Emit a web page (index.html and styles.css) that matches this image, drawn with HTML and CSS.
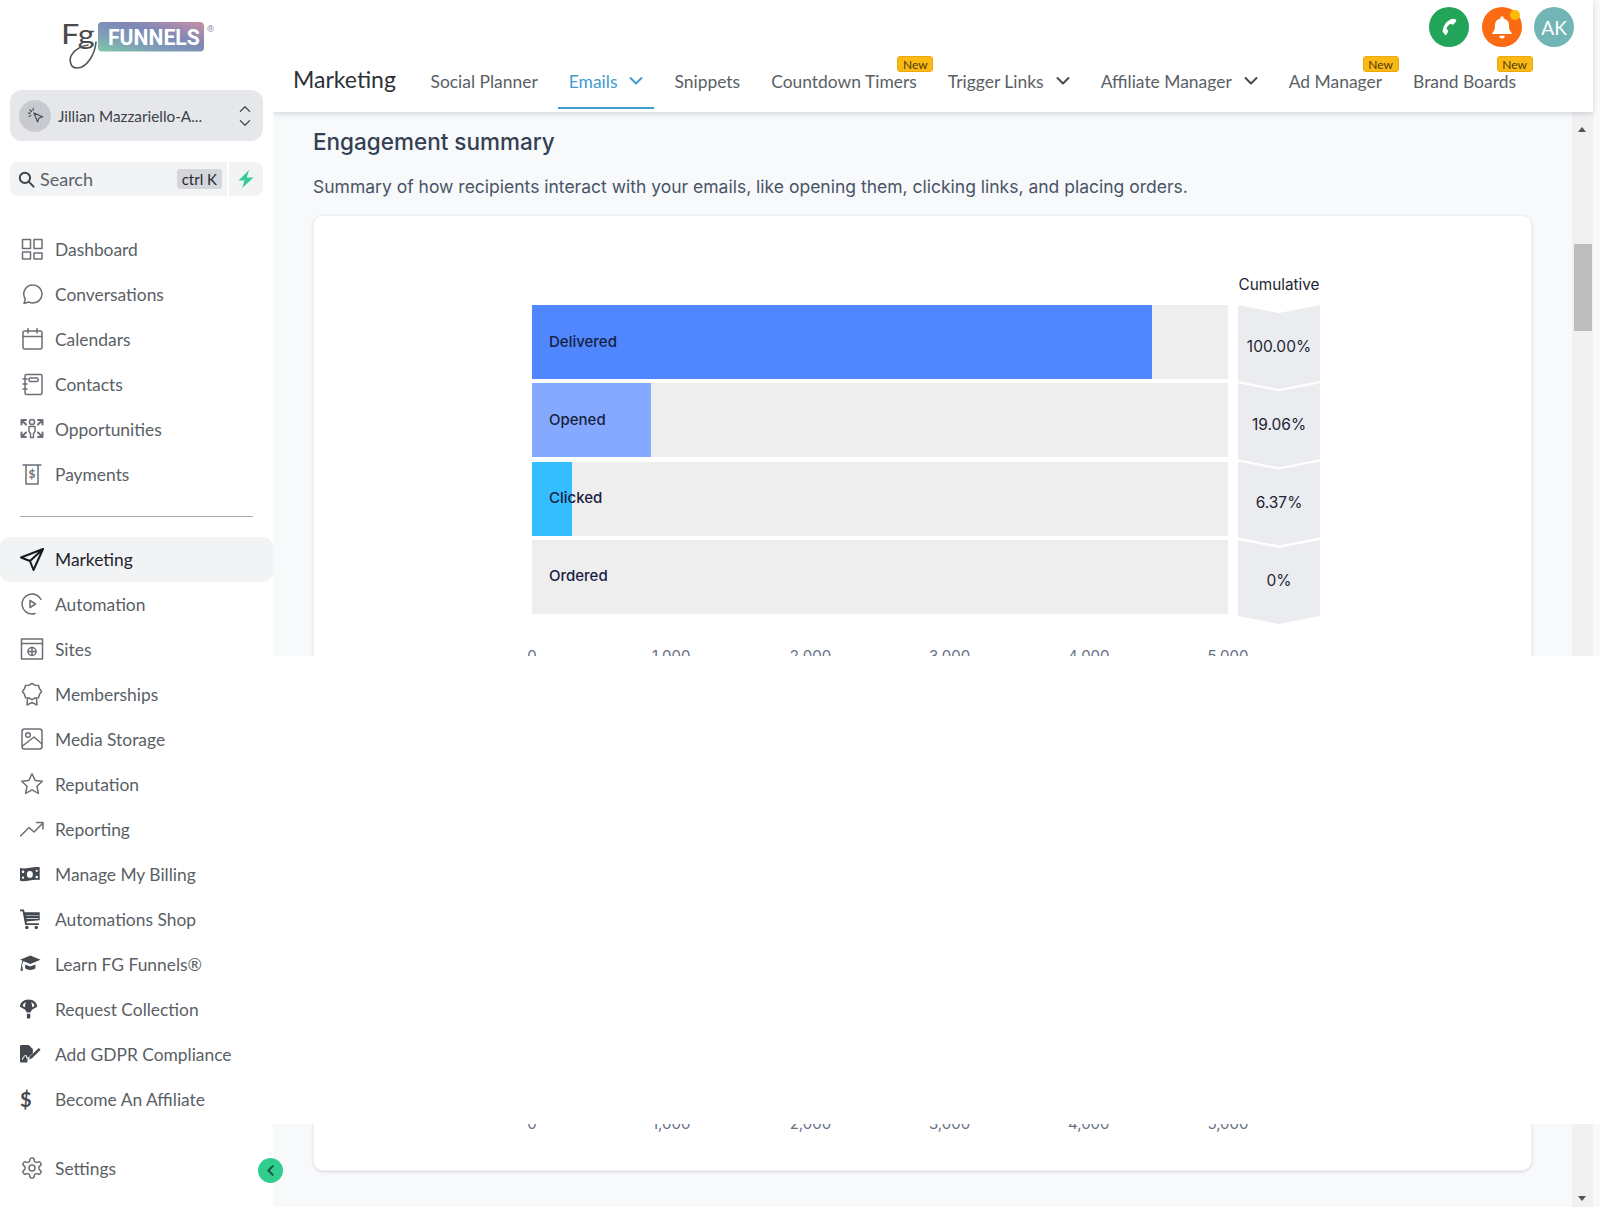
FILE: index.html
```html
<!DOCTYPE html>
<html lang="en">
<head>
<meta charset="utf-8">
<title>Marketing - Engagement summary</title>
<link rel="stylesheet" href="styles.css">
</head>
<body>
<div class="app">
  <aside class="sidebar">
    <div class="logo">
      <svg class="logo-svg" viewBox="0 0 160 52" width="160" height="52">
        <defs>
          <linearGradient id="lg" x1="0" y1="1" x2="1" y2="0">
            <stop offset="0" stop-color="#7dcaa2"/>
            <stop offset=".3" stop-color="#7f9fb8"/>
            <stop offset=".6" stop-color="#7d88b6"/>
            <stop offset="1" stop-color="#c98fa6"/>
          </linearGradient>
        </defs>
        <rect x="38" y="0" width="106" height="29.500" rx="4" fill="url(#lg)"/>
        <text class="logo-word" transform="translate(48 23) scale(.94 1)">FUNNELS</text>
        <text class="logo-reg" x="147" y="10">®</text>
        <text class="logo-fg" transform="translate(1 22) scale(1.250 1)">Fg</text>
        <path class="logo-tail" d="M36 20C35 32 27 46 17 46C10 46 8 37 13 31C17 26 22 24 28 23"/>
      </svg>
    </div>

    <div class="switcher">
      <span class="switch-avatar">
        <svg viewBox="0 0 24 24" width="19" height="19" class="ic-s"><path d="M10 9l11 4.500-4.500 1.700L14.600 20z"/><path d="M5 5l2 2M9 3v2.500M3 9h2.500M4 13l2-1"/></svg>
      </span>
      <span class="switch-name">Jillian Mazzariello-A...</span>
      <svg class="switch-arrows ic-s" viewBox="0 0 14 26" width="14" height="24"><path d="M2 8l5-5 5 5M2 18l5 5 5-5"/></svg>
    </div>

    <div class="search-row">
      <div class="search">
        <svg viewBox="0 0 24 24" width="19" height="19" class="ic-d"><circle cx="10" cy="10" r="6.500"/><path d="M15 15l6 6"/></svg>
        <span class="search-label">Search</span>
        <span class="kbd">ctrl K</span>
      </div>
      <div class="bolt">
        <svg viewBox="0 0 24 24" width="18" height="20"><path fill="#37ca93" d="M16 0L2 14h8l-3 10 15-14h-9z"/></svg>
      </div>
    </div>

    <nav class="nav">
      <a class="nav-item"><svg class="ic" viewBox="0 0 24 24"><rect x="2.500" y="2.500" width="8" height="9"/><rect x="14" y="2.500" width="8" height="9"/><rect x="2.500" y="15" width="8" height="7"/><rect x="14" y="16" width="8" height="6"/></svg><span>Dashboard</span></a>
      <a class="nav-item"><svg class="ic" viewBox="0 0 24 24"><path d="M13 3a9 9 0 0 1 0 18c-1.600 0-3-.4-4.300-1L4 21.500l1.300-4.500A9 9 0 0 1 13 3z"/></svg><span>Conversations</span></a>
      <a class="nav-item"><svg class="ic" viewBox="0 0 24 24"><rect x="3" y="4" width="19" height="18" rx="1.500"/><path d="M3 9.500h19M8 1.500V6M17 1.500V6"/></svg><span>Calendars</span></a>
      <a class="nav-item"><svg class="ic" viewBox="0 0 24 24"><rect x="5" y="2.500" width="17" height="20" rx="1.500"/><rect x="9" y="6" width="9" height="3.500" rx="1"/><path d="M3 7h4M3 12h4M3 17h4"/></svg><span>Contacts</span></a>
      <a class="nav-item"><svg class="ic" viewBox="0 0 24 24"><circle cx="12" cy="5" r="2.500"/><path d="M9 9.500h6v5l-1.500 2v4h-3v-4L9 14.500z"/><path class="thick" d="M1.500 3h4.500M1.500 3v4.500M1.500 3l4.500 4.500M22.500 3H18M22.500 3v4.500M22.500 3L18 7.500M1.500 20H6M1.500 20v-4.500M1.500 20L6 15.500M22.500 20H18M22.500 20v-4.500M22.500 20L18 15.500"/></svg><span>Opportunities</span></a>
      <a class="nav-item"><svg class="ic" viewBox="0 0 24 24"><path d="M3 3h18M6 3v19h12V3"/><text class="ic-text" x="12" y="16" text-anchor="middle">$</text></svg><span>Payments</span></a>

      <div class="divider"></div>

      <a class="nav-item active"><svg class="ic ic-dark" viewBox="0 0 24 24"><path d="M23 2L1 10.500l9 3.500 3.500 9zM23 2L10 14"/></svg><span>Marketing</span></a>
      <a class="nav-item"><svg class="ic" viewBox="0 0 24 24"><path d="M21 7.500A10 10 0 1 0 12 22a10 10 0 0 0 3-.5M13 2a10 10 0 0 1 3 .9"/><path d="M10 8.500l5.500 3.500-5.500 3.500z"/></svg><span>Automation</span></a>
      <a class="nav-item"><svg class="ic" viewBox="0 0 24 24"><rect x="1.500" y="2" width="21" height="20"/><path d="M1.500 6.500h21"/><circle cx="12" cy="14.500" r="4"/><path d="M8 14.500h8M12 10.500v8"/></svg><span>Sites</span></a>
      <a class="nav-item"><svg class="ic" viewBox="0 0 24 24"><path d="M12 1.500l3 1.700 3.500.3 1 3.300 2 2.700-2 2.900-1 3.300-3.500.3-3 1.700-3-1.700-3.500-.3-1-3.300-2-2.900 2-2.700 1-3.300 3.500-.3z"/><path d="M7.500 16.500L7 23l5-2.500 5 2.500-.5-6.500"/></svg><span>Memberships</span></a>
      <a class="nav-item"><svg class="ic" viewBox="0 0 24 24"><rect x="2" y="2" width="20" height="20" rx="2.500"/><circle cx="8" cy="8" r="2.300"/><path d="M2.500 19L14 10l8 7"/></svg><span>Media Storage</span></a>
      <a class="nav-item"><svg class="ic" viewBox="0 0 24 24"><path d="M12 1.800l3.100 6.600 7.200.9-5.300 5 1.400 7.100-6.400-3.500-6.400 3.500L7 14.300l-5.300-5 7.200-.9z"/></svg><span>Reputation</span></a>
      <a class="nav-item"><svg class="ic" viewBox="0 0 24 24"><path d="M0.500 19L9 10.500l5 4.500 9-9M16.500 5.500H23V12"/></svg><span>Reporting</span></a>
      <a class="nav-item"><svg class="ic ic-fill" viewBox="0 -2 28 28"><path fill-rule="evenodd" d="M0 5c7 2 15-2.500 23-1v15c-8-1.500-16 2.500-23 1zM11.500 8.500a3.500 4 0 1 0 0 8 3.500 4 0 0 0 0-8zM3.500 8a1.500 1.500 0 1 0 0 3 1.500 1.500 0 0 0 0-3zM19.500 14a1.500 1.500 0 1 0 0 3 1.500 1.500 0 0 0 0-3zM19.500 7a1.300 1.300 0 1 0 0 2.600 1.300 1.300 0 0 0 0-2.600zM3.500 15a1.300 1.300 0 1 0 0 2.600 1.300 1.300 0 0 0 0-2.600z"/></svg><span>Manage My Billing</span></a>
      <a class="nav-item"><svg class="ic ic-fill" viewBox="0 -2 28 28"><path fill-rule="evenodd" d="M0 1h4.500l1 3H23v9.500L7.500 15l.5 2h14v2H6L3 3H0zM7 7.200v.8h15v-.8zM7.500 10.800v.8h14v-.8z"/><circle cx="8" cy="22" r="2"/><circle cx="19" cy="22" r="2"/></svg><span>Automations Shop</span></a>
      <a class="nav-item"><svg class="ic ic-fill" viewBox="0 -2 28 28"><path d="M12 2L0 7l3 1.300C2 10 1.500 12 1.500 14L.5 20h3l-1-6c0-1.800.5-3.800 1.800-5.300L12 12l12-5z"/><path d="M6 12.500V17c3 2.500 9 2.500 12 0v-4.500L12 15z"/></svg><span>Learn FG Funnels®</span></a>
      <a class="nav-item"><svg class="ic ic-fill" viewBox="0 -2 28 28"><path d="M10 1C4 1 0 5 0 9.500L6 13l2 3h4l2-3 6-3.500C20 5 16 1 10 1zM6 10L3 8.500C3.500 6 5 4.500 7 4c-1 1.500-1.200 3.500-1 6zm8 0c.2-2.500 0-4.500-1-6 2 .5 3.500 2 4 4.500zM8 17.500h4V22a1 1 0 0 1-1 1H9a1 1 0 0 1-1-1z"/></svg><span>Request Collection</span></a>
      <a class="nav-item"><svg class="ic ic-fill" viewBox="0 -2 28 28"><path fill-rule="evenodd" d="M0 3a1.500 1.500 0 0 1 1.500-1.500H10l5 5V11l-6 6-.5 5h-7A1.500 1.500 0 0 1 0 20.500zM3 19c2-4 3.500-6 4-3.500s1.500 2 3 1l-.5-1c-1 .6-1.200.4-1.500-.7-.6-3-3.500-2-6 3.700z"/><path d="M10 1.500v5h5zM22 5l2 2-10 10-3.500 1.500 1-3.500z"/></svg><span>Add GDPR Compliance</span></a>
      <a class="nav-item"><span class="ic-dollar">$</span><span>Become An Affiliate</span></a>

      <a class="nav-item settings"><svg class="ic" viewBox="0 0 24 24"><path d="M12.220 2h-.44a2 2 0 0 0-2 2v.18a2 2 0 0 1-1 1.730l-.43.25a2 2 0 0 1-2 0l-.15-.08a2 2 0 0 0-2.730.73l-.22.38a2 2 0 0 0 .73 2.730l.15.1a2 2 0 0 1 1 1.720v.51a2 2 0 0 1-1 1.740l-.15.09a2 2 0 0 0-.73 2.730l.22.38a2 2 0 0 0 2.730.73l.15-.08a2 2 0 0 1 2 0l.43.25a2 2 0 0 1 1 1.730V20a2 2 0 0 0 2 2h.44a2 2 0 0 0 2-2v-.18a2 2 0 0 1 1-1.730l.43-.25a2 2 0 0 1 2 0l.15.08a2 2 0 0 0 2.730-.73l.22-.39a2 2 0 0 0-.73-2.730l-.15-.08a2 2 0 0 1-1-1.740v-.5a2 2 0 0 1 1-1.740l.15-.09a2 2 0 0 0 .73-2.730l-.22-.38a2 2 0 0 0-2.730-.73l-.15.08a2 2 0 0 1-2 0l-.43-.25a2 2 0 0 1-1-1.730V4a2 2 0 0 0-2-2z"/><circle cx="12" cy="12" r="3"/></svg><span>Settings</span></a>
    </nav>

    <button class="collapse" type="button" aria-label="Collapse sidebar">
      <svg viewBox="0 0 12 12" width="13" height="13"><path d="M8 2L4 6l4 4"/></svg>
    </button>
  </aside>

  <main class="main">
    <header class="topbar">
      <div class="top-actions">
        <span class="circle c-green">
          <svg viewBox="0 0 24 24" width="22" height="22"><path fill="#fff" d="M19 3.500l-3.500-.5c-6 2-10 7.500-10.500 14l2.500 3.500c.8.400 1.500.200 2-.5l1.500-3c.3-.7.200-1.300-.4-1.800l-1.400-1.200c.8-2.500 2-4 4.300-5.500l1.800.9c.7.300 1.300.100 1.800-.4l2.500-3c.6-.9.500-1.800-.6-2.500z"/></svg>
        </span>
        <span class="circle c-orange">
          <svg viewBox="0 0 24 24" width="26" height="26"><path fill="#fff" d="M12 2a1.500 1.500 0 0 1 1.500 1.500v.7A6.500 6.500 0 0 1 18.500 10.500c0 4 1 5.500 2.500 7v1H3v-1c1.500-1.500 2.500-3 2.500-7A6.500 6.500 0 0 1 10.500 4.200v-.7A1.500 1.500 0 0 1 12 2zM9.500 20h5a2.500 2.500 0 0 1-5 0z"/></svg>
          <span class="dot"></span>
        </span>
        <span class="circle c-teal">AK</span>
      </div>
      <div class="tabbar">
        <h1 class="page-title">Marketing</h1>
        <div class="tabs">
          <a class="tab">Social Planner</a>
          <a class="tab tab-active">Emails<svg class="chev" viewBox="0 0 14 10" width="14" height="10"><path d="M1.500 2l5.500 5.500L12.500 2"/></svg></a>
          <a class="tab">Snippets</a>
          <a class="tab">Countdown Timers<span class="badge">New</span></a>
          <a class="tab">Trigger Links<svg class="chev" viewBox="0 0 14 10" width="14" height="10"><path d="M1.500 2l5.500 5.500L12.500 2"/></svg></a>
          <a class="tab">Affiliate Manager<svg class="chev" viewBox="0 0 14 10" width="14" height="10"><path d="M1.500 2l5.500 5.500L12.500 2"/></svg></a>
          <a class="tab">Ad Manager<span class="badge">New</span></a>
          <a class="tab">Brand Boards<span class="badge">New</span></a>
        </div>
      </div>
    </header>

    <div class="body">
      <div class="content">
        <h2 class="section-title">Engagement summary</h2>
        <p class="section-desc">Summary of how recipients interact with your emails, like opening them, clicking links, and placing orders.</p>
        <section class="card">
          <div class="chart">
            <div class="chart-head"><span class="cum-title">Cumulative</span></div>
            <div class="rows">
              <div class="row">
                <div class="bar"><div class="fill fill-a" style="width:89.1%"></div><span class="bar-label">Delivered</span></div>
                <div class="cum"><span>100.00%</span></div>
              </div>
              <div class="row">
                <div class="bar"><div class="fill fill-b" style="width:17.1%"></div><span class="bar-label">Opened</span></div>
                <div class="cum"><span>19.06%</span></div>
              </div>
              <div class="row">
                <div class="bar"><div class="fill fill-c" style="width:5.7%"></div><span class="bar-label">Clicked</span></div>
                <div class="cum"><span>6.37%</span></div>
              </div>
              <div class="row">
                <div class="bar"><span class="bar-label">Ordered</span></div>
                <div class="cum"><span>0%</span></div>
              </div>
            </div>
            <div class="axis"><span>0</span><span>1,000</span><span>2,000</span><span>3,000</span><span>4,000</span><span>5,000</span></div>
            <div class="chart-gap"></div>
            <div class="axis"><span>0</span><span>1,000</span><span>2,000</span><span>3,000</span><span>4,000</span><span>5,000</span></div>
          </div>
        </section>
      </div>
      <div class="scrollbar">
        <span class="arrow-up"></span>
        <div class="thumb"></div>
        <span class="arrow-down"></span>
      </div>
    </div>

    <div class="blank"></div>
  </main>
</div>
</body>
</html>
```

FILE: styles.css
```css
* { box-sizing: border-box; }
html, body { margin: 0; padding: 0; height: 1207px; overflow: hidden; background: #fff; }
body { font-family: "Lato", sans-serif; color: #555b63; }

.app { display: flex; height: 1207px; }

/* Sidebar */
.sidebar { position: relative; z-index: 3; flex: 0 0 273px; width: 273px; background: #fff; display: flex; flex-direction: column; }
.logo { height: 90px; padding: 22px 0 0 60px; }
.logo-svg { display: block; overflow: visible; }
.logo-word { font-family: "Roboto", sans-serif; font-weight: 700; font-size: 22.500px; fill: #fff; }
.logo-reg { font-family: "Roboto", sans-serif; font-size: 9px; fill: #8a8f99; }
.logo-fg { font-family: "Lato", sans-serif; font-weight: 400; font-size: 26px; fill: #4a4a4a; }
.logo-tail { fill: none; stroke: #555; stroke-width: 1.600; stroke-linecap: round; }

.switcher { margin: 0 10px; height: 51px; background: #e6e7eb; border-radius: 12px; display: flex; align-items: center; padding: 0 9px; }
.switch-avatar { flex: 0 0 32px; height: 32px; border-radius: 50%; background: #c9cacf; display: flex; align-items: center; justify-content: center; }
.switch-name { flex: 1; margin-left: 7px; font-size: 15.300px; color: #3b4048; white-space: nowrap; }
.switch-arrows { margin-right: 2px; }
.ic-s { fill: none; stroke: #444a52; stroke-width: 1.500; stroke-linecap: round; stroke-linejoin: round; }
.ic-d { fill: none; stroke: #3f444c; stroke-width: 2.500; stroke-linecap: round; flex: none; }

.search-row { margin: 21px 10px 31px; height: 34px; display: flex; gap: 2px; }
.search { flex: 0 0 217px; background: #f2f3f5; border-radius: 8px 0 0 8px; display: flex; align-items: center; padding: 0 5px 0 7px; }
.search-label { flex: 1; margin-left: 4px; font-size: 18px; color: #5b6068; }
.kbd { height: 20px; line-height: 20px; padding: 0 5px; background: #d4d6db; border-radius: 3px; font-size: 15px; color: #262a30; }
.bolt { flex: 1; background: #f2f3f5; border-radius: 0 8px 8px 0; display: flex; align-items: center; justify-content: center; }

.nav { display: flex; flex-direction: column; }
.nav-item { height: 45px; display: flex; align-items: center; padding: 0 0 1px 20px; gap: 11px; font-size: 17.400px; color: #5a5f66; border-radius: 10px; white-space: nowrap; }
.nav-item.active { background: #f2f3f5; color: #20242a; }
.nav-item.settings { margin-top: 24px; }
.divider { height: 1px; margin: 19px 20px 20px; background: #a6a9af; }
.ic { flex: 0 0 24px; width: 24px; height: 24px; fill: none; stroke: #6b6f75; stroke-width: 1.500; stroke-linecap: round; stroke-linejoin: round; }
.ic .thick { stroke-width: 2; }
.ic-dark { stroke: #15181d; stroke-width: 2; }
.ic-fill { fill: #44484f; stroke: none; }
.ic-text { font-family: "Lato", sans-serif; font-size: 12px; font-weight: 700; fill: #6b6f75; stroke: none; }
.ic-dollar { flex: 0 0 24px; width: 24px; line-height: 24px; font-size: 20px; font-weight: 700; color: #44484f; }

.collapse { position: absolute; left: 258px; top: 1158px; width: 25px; height: 25px; padding: 0; border: 0; border-radius: 50%; background: #2fce8f; display: flex; align-items: center; justify-content: center; }
.collapse path { fill: none; stroke: #1c5a44; stroke-width: 2; stroke-linecap: round; stroke-linejoin: round; }

/* Main */
.main { position: relative; flex: 1; min-width: 0; display: flex; flex-direction: column; background: #f8f9fb; }
.topbar { position: relative; z-index: 2; flex: 0 0 112px; margin-right: 7px; background: #fff; box-shadow: 0 2px 5px rgba(90, 100, 120, .22); }
.top-actions { position: absolute; top: 7px; right: 0; display: flex; gap: 12.500px; padding-right: 19px; }
.circle { position: relative; width: 40px; height: 40px; border-radius: 50%; display: flex; align-items: center; justify-content: center; }
.c-green { background: #22a559; }
.c-orange { background: #fd6a14; }
.c-teal { background: #72b5b5; color: #fff; font-size: 19px; }
.dot { position: absolute; top: 3px; right: 2px; width: 10px; height: 10px; border-radius: 50%; background: #fbbc05; }

.tabbar { position: absolute; left: 20px; right: 0; top: 56px; height: 56px; display: flex; }
.page-title { margin: 0; font-weight: 400; font-size: 23px; line-height: 26px; padding-top: 10px; color: #2c3138; width: 127px; flex: none; }
.tabs { display: flex; gap: 10px; }
.tab { position: relative; height: 53px; padding: 13px 10.500px 0; line-height: 25px; font-size: 17.450px; color: #5a5f66; white-space: nowrap; display: flex; align-items: flex-start; border-bottom: 2px solid transparent; }
.tab-active { color: #3f9ccf; border-bottom-color: #3f9ccf; }
.chev { margin: 7px 0 0 12px; fill: none; stroke: #454a51; stroke-width: 2; stroke-linecap: round; stroke-linejoin: round; }
.tab-active .chev { stroke: #3f9ccf; }
.badge { position: absolute; top: 0; right: -6px; width: 36px; height: 16px; line-height: 15px; text-align: center; background: #fbb916; border-radius: 3px; border: 1px solid #eaa90c; font-size: 12px; color: #4e3a05; }

.body { flex: 1; min-height: 0; display: flex; }
.content { flex: 1; min-width: 0; padding: 16px 40px 0; font-family: "Inter", sans-serif; }
.section-title { margin: 0; font-weight: 500; font-size: 22.500px; line-height: 28px; color: #344054; }
.section-desc { margin: 19px 0 0; font-size: 17.500px; line-height: 24px; color: #475467; white-space: nowrap; }
.card { margin-top: 16px; height: 956px; background: #fff; border-radius: 10px; border: 1px solid #f0f1f4; box-shadow: 0 1px 3px rgba(16, 24, 40, .14); padding: 57px 0 0 218px; }

.chart { width: 788px; }
.chart-head { height: 32px; display: flex; justify-content: flex-end; padding-top: 2px; }
.cum-title { width: 82px; font-size: 15.300px; line-height: 20px; color: #1d2433; white-space: nowrap; display: flex; justify-content: center; }
.rows { display: flex; flex-direction: column; gap: 4.300px; }
.row { display: flex; gap: 10px; height: 74px; }
.bar { position: relative; flex: 0 0 696px; background: #eeeeef; display: flex; align-items: center; }
.fill { position: absolute; left: 0; top: 0; bottom: 0; }
.fill-a { background: #5087ff; }
.fill-b { background: #84a9ff; }
.fill-c { background: #34bdff; }
.bar-label { position: relative; margin-left: 17px; padding-bottom: 2px; font-size: 15px; font-weight: 500; color: #17213f; }
.cum { flex: 0 0 82px; height: 84px; padding-bottom: 2px; background: #ebecf0; display: flex; align-items: center; justify-content: center; font-size: 15.500px; color: #1d2433; clip-path: polygon(0 0, 50% 8px, 100% 0, 100% 76px, 50% 84px, 0 76px); }
.axis { display: flex; justify-content: space-between; width: 696px; margin-top: 32px; font-size: 15px; line-height: 20px; color: #667085; }
.axis + .chart-gap + .axis { margin-top: 31px; }
.axis span { width: 0; display: flex; justify-content: center; white-space: nowrap; }
.chart-gap { height: 417px; }

/* Scrollbar */
.scrollbar { position: relative; flex: 0 0 21px; margin-right: 7px; background: #f1f1f1; }
.thumb { position: absolute; left: 2px; right: 1px; top: 132px; height: 87px; background: #bdbdbd; }
.arrow-up, .arrow-down { position: absolute; left: 6px; width: 0; height: 0; border-left: 4.500px solid transparent; border-right: 4.500px solid transparent; }
.arrow-up { top: 15px; border-bottom: 5px solid #555; }
.arrow-down { bottom: 6px; border-top: 5px solid #555; }

/* Blank band over the middle of the page */
.blank { position: absolute; z-index: 1; left: 0; right: 0; top: 656px; height: 468px; background: #fff; }
```
